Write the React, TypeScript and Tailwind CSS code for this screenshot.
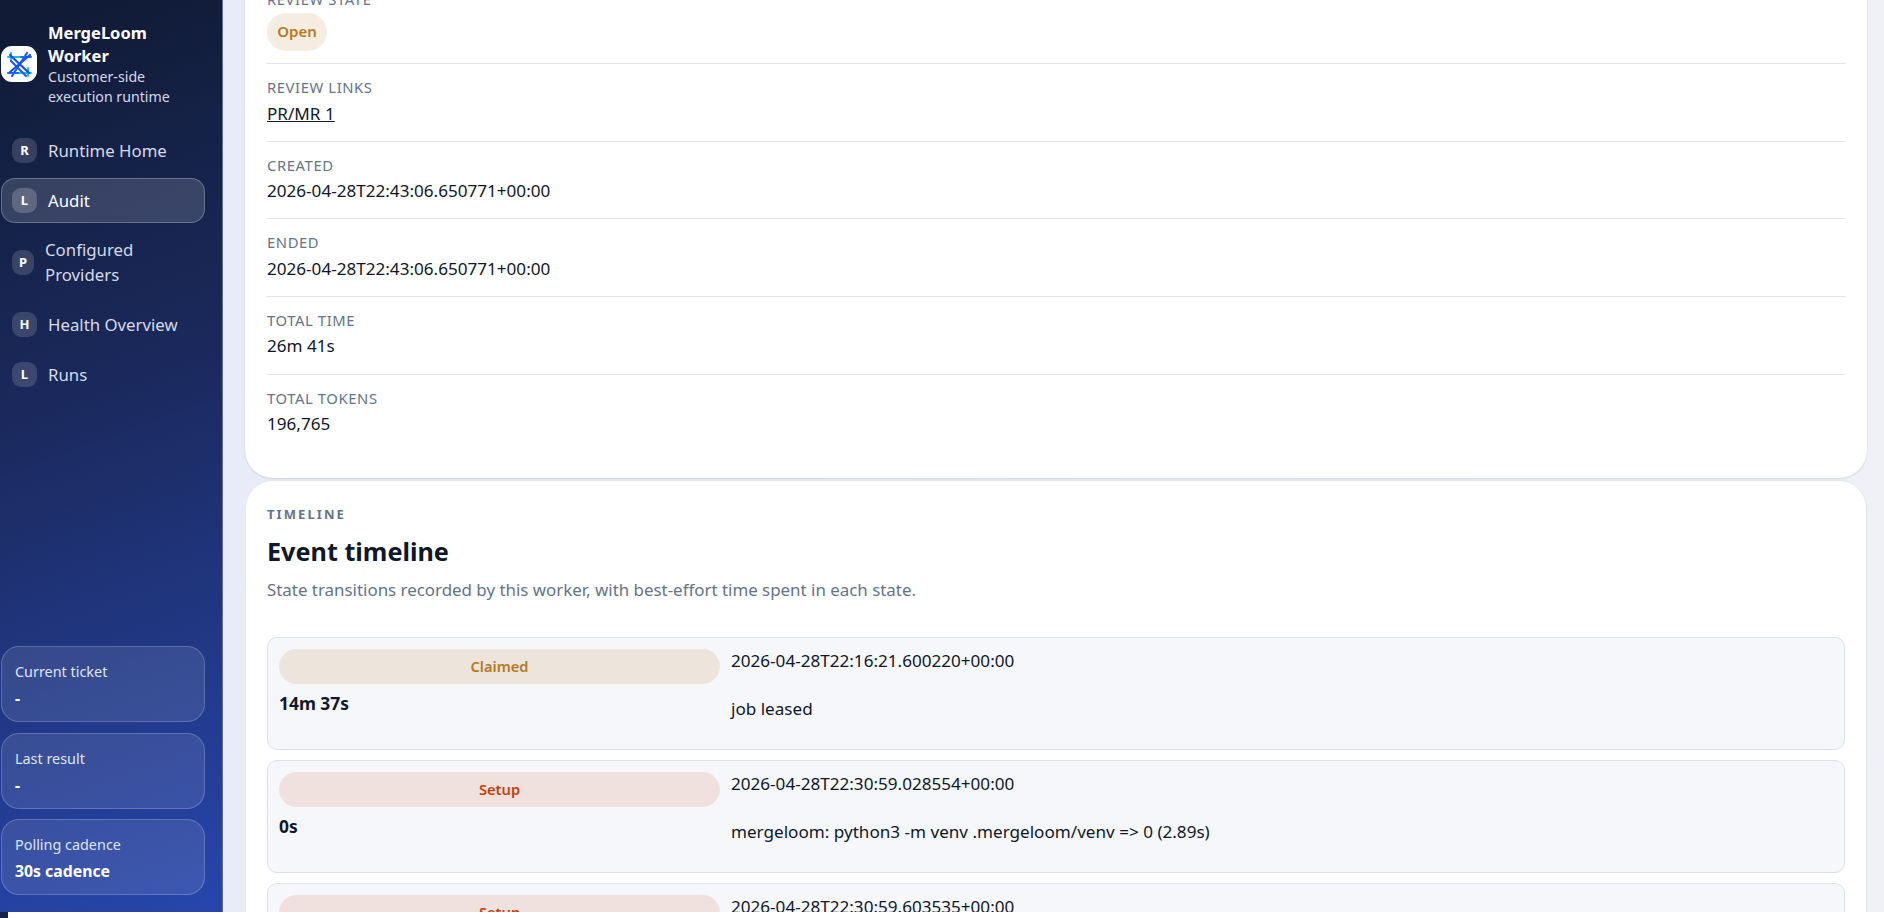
const font = { fontFamily: '"Noto Sans", "Liberation Sans", sans-serif' };

function Logo() {
  return (
    <div className="flex h-9 w-9 shrink-0 items-center justify-center rounded-[11px] bg-white">
      <svg viewBox="0 0 36 36" className="h-9 w-9" fill="none" strokeLinecap="round">
        <path d="M7 11H20M17 27H30" stroke="#22b8f0" strokeWidth="2" />
        <path d="M10 7V15M27 22V30" stroke="#22b8f0" strokeWidth="2" />
        <path d="M20 11H30M7 27H17" stroke="#1d6ff2" strokeWidth="2.2" />
        <path d="M26 7L11 30" stroke="#1d5ff2" strokeWidth="2.2" />
        <path d="M10 15L25 30" stroke="#1d5ff2" strokeWidth="2.2" />
        <path d="M9 26L29 9M9 9L28 27" stroke="#1450f0" strokeWidth="2.2" />
      </svg>
    </div>
  );
}

function Badge({ letter, active, narrow }: { letter: string; active?: boolean; narrow?: boolean }) {
  return (
    <span
      className={`flex h-[25px] shrink-0 items-center justify-center rounded-[9px] text-[13px] font-bold text-white ${narrow ? "w-[22px]" : "w-[25px]"} ${active ? "bg-white/20" : "bg-white/15"}`}
    >
      {letter}
    </span>
  );
}

function NavItem({ letter, label }: { letter: string; label: string }) {
  return (
    <div className="flex items-center gap-[11px] pl-3 text-[16.8px] leading-[25px] text-[#d6dbe8]">
      <Badge letter={letter} />
      <span>{label}</span>
    </div>
  );
}

function StatusCard({ label, value }: { label: string; value: string }) {
  return (
    <div className="h-[76px] w-[204px] rounded-[18px] border border-white/20 bg-white/10 pl-[13px] pt-[13px]">
      <div className="text-[14.4px] leading-[24px] text-[#dfe4f1]">{label}</div>
      <div className="text-[15.8px] font-bold leading-[28px] text-white">{value}</div>
    </div>
  );
}

function Sidebar() {
  return (
    <aside className="flex h-[912px] w-[223px] shrink-0 flex-col border-r border-[#5c6b8e] bg-[linear-gradient(160deg,#101a33_0%,#1b2a5f_45%,#2746ad_100%)] pl-px">
      <div className="flex items-center gap-[11px] pt-[21px]">
        <Logo />
        <div className="w-[150px]">
          <div className="w-[100px] text-[16.5px] font-bold leading-[23px] text-white">MergeLoom Worker</div>
          <div className="text-[14.2px] leading-[20px] text-[#d3d9e8]">Customer-side execution runtime</div>
        </div>
      </div>
      <div className="mt-[31px] flex flex-col">
        <div className="-ml-px"><NavItem letter="R" label="Runtime Home" /></div>
        <div className="mt-[15px] flex h-[45px] w-[204px] items-center gap-[11px] rounded-[14px] border border-white/25 bg-white/15 pl-[10px] text-[16.8px] text-white">
          <Badge letter="L" active />
          <span>Audit</span>
        </div>
        <div className="mt-[14px] flex items-center gap-[11px] pl-[11px] text-[16.8px] leading-[25px] text-[#d6dbe8]">
          <Badge letter="P" narrow />
          <span className="w-[110px]">Configured Providers</span>
        </div>
        <div className="mt-[25px] -ml-px"><NavItem letter="H" label="Health Overview" /></div>
        <div className="mt-[25px] -ml-px"><NavItem letter="L" label="Runs" /></div>
      </div>
      <div className="mt-auto flex flex-col gap-[10.5px] pb-[17px]">
        <StatusCard label="Current ticket" value="-" />
        <StatusCard label="Last result" value="-" />
        <StatusCard label="Polling cadence" value="30s cadence" />
      </div>
    </aside>
  );
}

function Row({ label, children, last }: { label: string; children: React.ReactNode; last?: boolean }) {
  return (
    <div className={`pt-[13px] ${last ? "" : "border-b border-[#e2e6ec]"} h-[77.6px]`}>
      <div className="text-[14.8px] uppercase leading-[20px] tracking-[0.04em] text-[#64748b]">{label}</div>
      <div className="mt-[3.5px] text-[17.1px] leading-[26px] text-[#0f172a]">{children}</div>
    </div>
  );
}

function Event({ state, pill, color, dur, time, msg }: { state: string; pill: string; color: string; dur: string; time: string; msg: string }) {
  return (
    <div className="grid h-[113px] shrink-0 grid-cols-[441px_1fr] gap-x-[11px] rounded-[10px] border border-[#dde1ea] bg-[#f6f7fb] pl-[11px] pr-[11px] pt-[11px]">
      <div>
        <div className={`flex h-[35px] items-center justify-center rounded-full text-[14.7px] font-semibold ${pill} ${color}`}>{state}</div>
        <div className="mt-[6px] text-[17.4px] font-bold leading-[26px] text-[#0f172a]">{dur}</div>
      </div>
      <div className="text-[17.1px] text-[#0f172a]">
        <div className="leading-[24px]">{time}</div>
        <div className="mt-[24px] leading-[24px]">{msg}</div>
      </div>
    </div>
  );
}

export default function App() {
  return (
    <div className="h-[918px] w-[1884px] overflow-hidden bg-white" style={font}>
      <div className="flex h-[912px]">
        <Sidebar />
        <main className="h-[912px] flex-1 overflow-hidden bg-[linear-gradient(90deg,#e7ecf8_0%,#eff1f7_100%)] pl-[22px] pr-[17px]">
          <div className="-mt-[105px]">
            <section className="h-[583px] rounded-[28px] bg-white px-[22px] pt-[14px] shadow-[0_1px_2px_rgba(15,23,42,0.12)]">
              <div className="h-[77.6px] border-b border-transparent" />
              <div className="h-[77.6px] border-b border-[#e2e6ec] pt-[2px]">
                <div className="text-[14.8px] uppercase leading-[20px] tracking-[0.04em] text-[#64748b]">Review state</div>
                <span className="mt-[4px] inline-flex h-[38px] w-[60px] items-center justify-center rounded-full bg-[#f5ede1] text-[15px] font-semibold text-[#b7791f]">Open</span>
              </div>
              <Row label="Review links"><span className="underline">PR/MR 1</span></Row>
              <Row label="Created">2026-04-28T22:43:06.650771+00:00</Row>
              <Row label="Ended">2026-04-28T22:43:06.650771+00:00</Row>
              <Row label="Total time">26m 41s</Row>
              <Row label="Total tokens" last>196,765</Row>
            </section>
            <section className="mt-[2px] rounded-[28px] border border-[#e4e7ee] bg-white px-[21px] pt-[23px]">
              <div className="text-[13px] font-bold uppercase leading-[20px] tracking-[0.16em] text-[#64748b]">Timeline</div>
              <h2 className="mt-[9px] text-[25.2px] font-bold leading-[36px] text-[#0f172a]">Event timeline</h2>
              <p className="mt-[9px] text-[16.9px] leading-[24px] text-[#64748b]">State transitions recorded by this worker, with best-effort time spent in each state.</p>
              <div className="mt-[35px] flex flex-col gap-[10px]">
                <Event state="Claimed" pill="bg-[#ede5dc]" color="text-[#b7791f]" dur="14m 37s" time="2026-04-28T22:16:21.600220+00:00" msg="job leased" />
                <Event state="Setup" pill="bg-[#f0e1de]" color="text-[#c2410c]" dur="0s" time="2026-04-28T22:30:59.028554+00:00" msg="mergeloom: python3 -m venv .mergeloom/venv => 0 (2.89s)" />
                <Event state="Setup" pill="bg-[#f0e1de]" color="text-[#c2410c]" dur="0s" time="2026-04-28T22:30:59.603535+00:00" msg="mergeloom" />
              </div>
            </section>
          </div>
        </main>
      </div>
      <div className="h-[6px] w-2 bg-[#16224a]" />
    </div>
  );
}
